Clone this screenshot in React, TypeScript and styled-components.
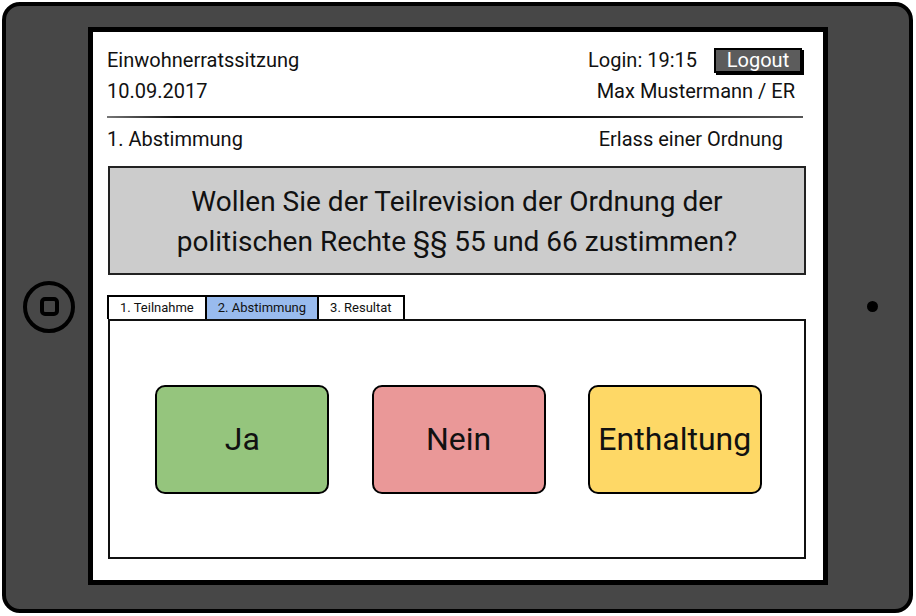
import React from 'react'
import styled, { createGlobalStyle } from 'styled-components'

const GlobalStyle = createGlobalStyle`
    html, body {
        margin: 0;
        padding: 0;
        background: #ffffff;
    }
    body {
        font-family: Roboto, "Liberation Sans", Arial, sans-serif;
        color: #111111;
    }
`

const tabs = ['1. Teilnahme', '2. Abstimmung', '3. Resultat']

const choices = [
    { label: 'Ja', color: '#95c57d' },
    { label: 'Nein', color: '#ea9898' },
    { label: 'Enthaltung', color: '#fed866' },
]

function App() {
    return (
        <>
            <GlobalStyle />
            <Page>
                <Device>
                    <LeftBezel>
                        <HomeButton>
                            <HomeSquare />
                        </HomeButton>
                    </LeftBezel>

                    <Screen>
                        <HeaderRow>
                            <HeaderText>Einwohnerratssitzung</HeaderText>
                            <LoginGroup>
                                <HeaderText>Login: 19:15</HeaderText>
                                <LogoutButton>Logout</LogoutButton>
                            </LoginGroup>
                        </HeaderRow>
                        <SubRow>
                            <HeaderText>10.09.2017</HeaderText>
                            <UserText>Max Mustermann / ER</UserText>
                        </SubRow>

                        <Divider />

                        <VoteRow>
                            <HeaderText>1. Abstimmung</HeaderText>
                            <TopicText>Erlass einer Ordnung</TopicText>
                        </VoteRow>

                        <QuestionBox>
                            Wollen Sie der Teilrevision der Ordnung der
                            <br />
                            politischen Rechte §§ 55 und 66 zustimmen?
                        </QuestionBox>

                        <TabBar>
                            {tabs.map((t, i) => (
                                <Tab key={t} active={i === 1}>{t}</Tab>
                            ))}
                        </TabBar>
                        <TabPanel>
                            {choices.map((c) => (
                                <ChoiceButton key={c.label} color={c.color}>{c.label}</ChoiceButton>
                            ))}
                        </TabPanel>
                    </Screen>

                    <RightBezel>
                        <Camera />
                    </RightBezel>
                </Device>
            </Page>
        </>
    )
}

export default App

const Page = styled.div`
    width: 916px;
    height: 616px;
    padding: 2px 0 0 2px;
    box-sizing: border-box;
`

const Device = styled.div`
    width: 911px;
    height: 611px;
    box-sizing: border-box;
    border: 4px solid #000;
    border-radius: 18px;
    background-color: #474747;
    display: flex;
    padding: 21px 0 24px 0;
`

const LeftBezel = styled.div`
    width: 82px;
    display: flex;
    align-items: center;
    justify-content: center;
`

const HomeButton = styled.div`
    width: 52px;
    height: 52px;
    box-sizing: border-box;
    border: 4px solid #000;
    border-radius: 50%;
    display: flex;
    align-items: center;
    justify-content: center;
    margin: 1px 0 0 4px;
`

const HomeSquare = styled.div`
    width: 19px;
    height: 19px;
    box-sizing: border-box;
    border: 4px solid #000;
    border-radius: 5px;
`

const RightBezel = styled.div`
    flex: 1;
    display: flex;
    align-items: center;
    justify-content: center;
    padding-left: 7px;
`

const Camera = styled.div`
    width: 11px;
    height: 11px;
    border-radius: 50%;
    background: #000;
`

const Screen = styled.div`
    width: 740px;
    box-sizing: border-box;
    border: 5px solid #000;
    background: #fff;
    display: flex;
    flex-direction: column;
    padding: 12px 17px 0 14px;
`

const HeaderRow = styled.div`
    height: 32px;
    display: flex;
    align-items: center;
    justify-content: space-between;
`

const SubRow = styled.div`
    height: 30px;
    display: flex;
    align-items: center;
    justify-content: space-between;
`

const HeaderText = styled.span`
    font-size: 20px;
    color: #111;
`

const UserText = styled(HeaderText)`
    margin-right: 11px;
`

const LoginGroup = styled.div`
    display: flex;
    align-items: center;
    gap: 17px;
`

const LogoutButton = styled.div`
    width: 88px;
    height: 25px;
    box-sizing: border-box;
    border: 2px solid #000;
    box-shadow: 2px 2px 0 #000;
    background: #5c5c5c;
    color: #fff;
    font-size: 20px;
    line-height: 21px;
    text-align: center;
    margin-right: 4px;
`

const Divider = styled.div`
    height: 2px;
    margin: 10px 3px 0 0;
    background: linear-gradient(90deg, #777 0%, #111 10%, #000 60%, #555 100%);
`

const VoteRow = styled.div`
    height: 24px;
    margin-top: 9px;
    display: flex;
    align-items: center;
    justify-content: space-between;
`

const TopicText = styled(HeaderText)`
    margin-right: 23px;
`

const QuestionBox = styled.div`
    margin: 15px 0 0 1px;
    height: 109px;
    box-sizing: border-box;
    border: 2px solid #222;
    background: #cccccc;
    display: flex;
    flex-direction: column;
    align-items: center;
    justify-content: center;
    text-align: center;
    font-size: 28px;
    line-height: 40px;
    color: #111;
    padding-top: 2px;
`

const TabBar = styled.div`
    margin-top: 20px;
    display: flex;
    height: 24px;
`

const Tab = styled.div<{ active?: boolean }>`
    box-sizing: border-box;
    height: 24px;
    padding: 0 11px;
    border: 2px solid #000;
    border-bottom: none;
    margin-right: -2px;
    background: ${(p) => (p.active ? '#99bbee' : '#fff')};
    font-size: 13px;
    line-height: 22px;
    color: #111;
`

const TabPanel = styled.div`
    margin-left: 1px;
    height: 240px;
    box-sizing: border-box;
    border: 2px solid #111;
    display: flex;
    align-items: center;
    justify-content: space-evenly;
    padding-left: 3px;
`

const ChoiceButton = styled.div<{ color: string }>`
    width: 174px;
    height: 109px;
    box-sizing: border-box;
    border: 2px solid #000;
    border-radius: 10px;
    background: ${(p) => p.color};
    display: flex;
    align-items: center;
    justify-content: center;
    font-size: 32px;
    color: #111;
`
